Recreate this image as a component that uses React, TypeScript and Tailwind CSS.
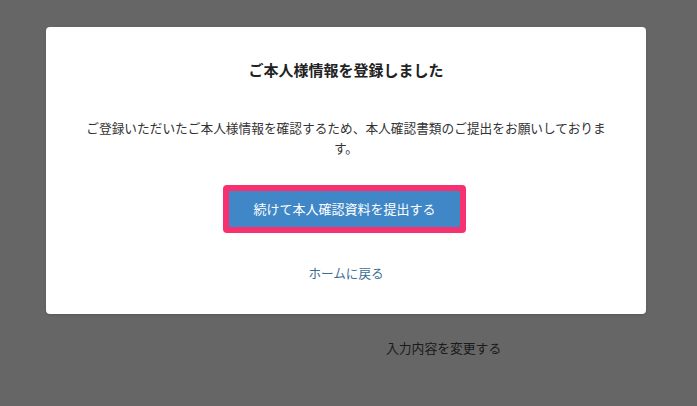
export default function App() {
  return (
    <div
      className="relative h-[406px] w-full overflow-hidden bg-white"
      style={{ fontFamily: '"Noto Sans CJK JP", "Noto Sans", sans-serif' }}
    >
      {/* page underneath the dialog */}
      <div className="flex pl-[386px] pt-[338px]">
        <span className="text-[12.8px] leading-[20px] text-[#444]">
          入力内容を変更する
        </span>
      </div>

      {/* overlay + dialog */}
      <div className="absolute inset-0 flex bg-black/60 pl-[46px] pt-[27px]">
        <div className="flex h-[287px] w-[600px] flex-col items-center rounded-[4px] bg-white px-[37px] pt-[32px] shadow-sm">
          <h2 className="text-[15px] font-bold leading-[22px] text-[#222]">
            ご本人様情報を登録しました
          </h2>
          <p className="mt-[37px] text-center text-[12.7px] leading-[19.5px] text-[#333]">
            ご登録いただいたご本人様情報を確認するため、本人確認書類のご提出をお願いしております。
          </p>
          <div className="mr-[3px] mt-[28px] rounded-[4px] bg-[#f7306f] p-[6px]">
            <button className="flex h-[36px] w-[231px] items-center justify-center bg-[#4087c8] text-[13px] text-white">
              続けて本人確認資料を提出する
            </button>
          </div>
          <a className="mt-[30px] text-[12.6px] leading-[20px] text-[#3a6d94]">
            ホームに戻る
          </a>
        </div>
      </div>
    </div>
  );
}
